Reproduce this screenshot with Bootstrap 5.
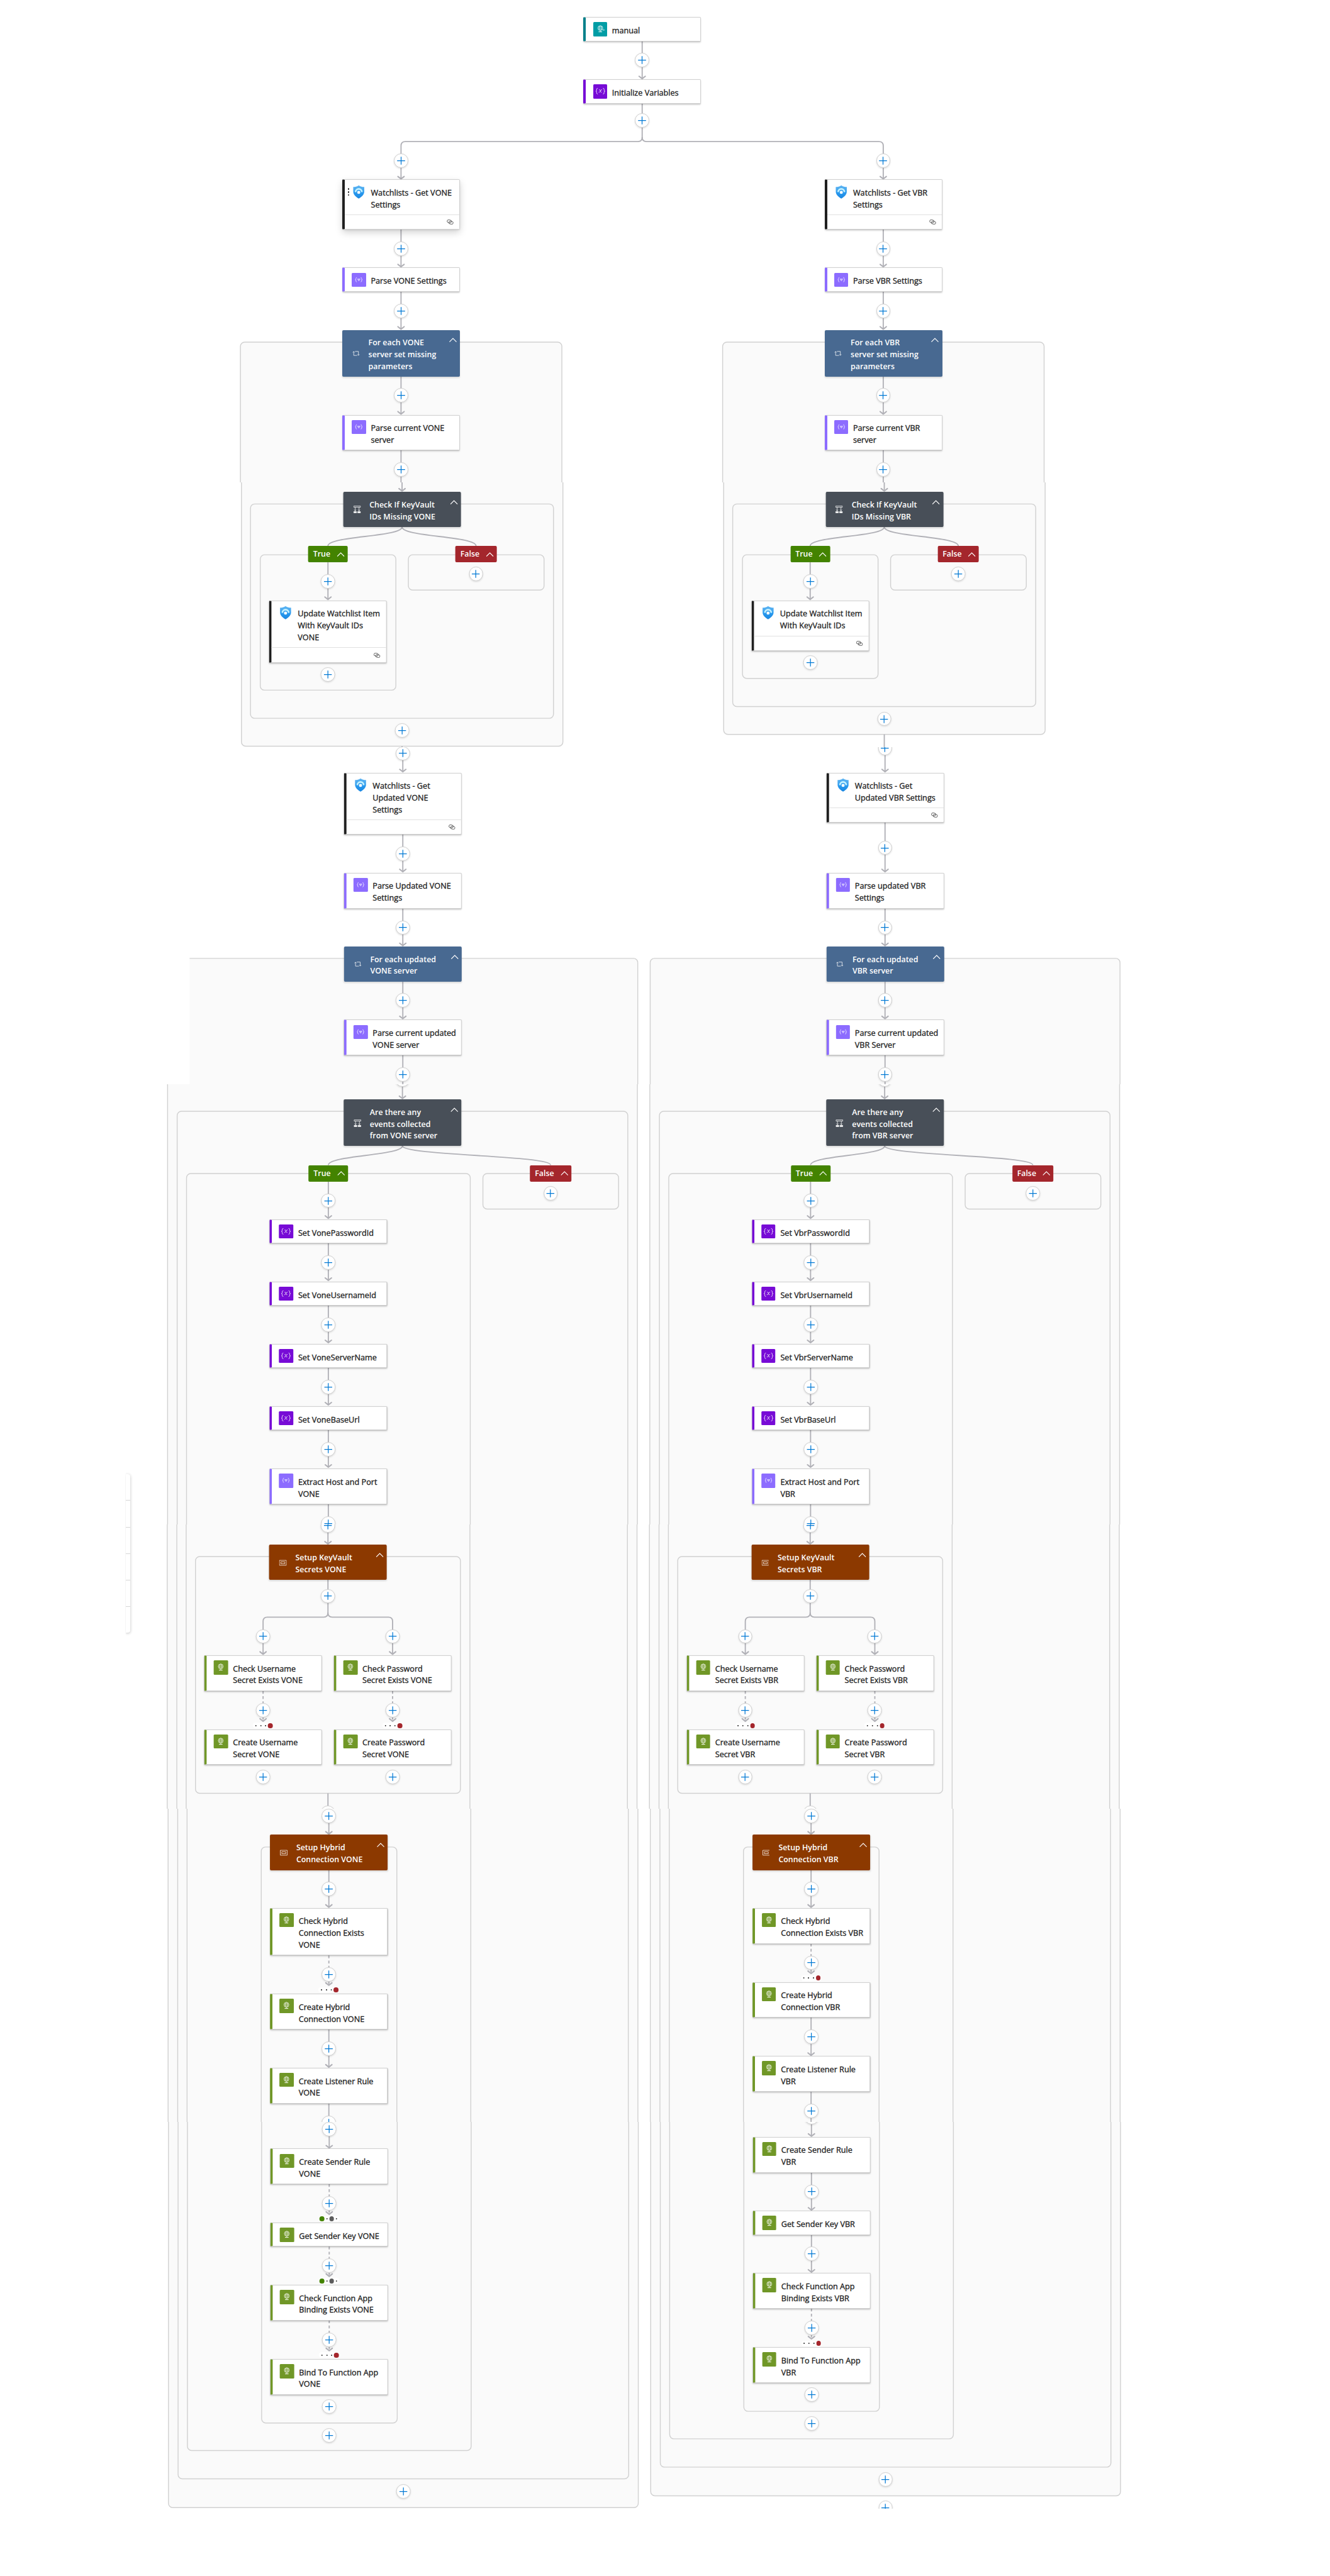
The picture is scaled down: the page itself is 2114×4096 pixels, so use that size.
<!DOCTYPE html>
<html lang="en">
<head>
<meta charset="utf-8">
<meta name="viewport" content="width=device-width, initial-scale=1">
<title>Logic app designer</title>
<link href="https://cdn.jsdelivr.net/npm/bootstrap@5.3.0/dist/css/bootstrap.min.css" rel="stylesheet">
<style>
  :root { --u: .74779px; }
  body { font-family: "Open Sans", "Noto Sans", sans-serif; background: #fff; color: #242424; overflow-x: hidden; }
  .flow { width: calc(2827 * var(--u)); height: 4096px; }
  .strip-layer { inset: 0; }
  .wires { left: 0; top: 0; }
  .frame-line { fill: #fafafa; stroke: #d1d1d1; stroke-width: 1.9; }
  .wire { fill: none; stroke: #b1b1b7; stroke-width: 2.5; }
  .wire-dash { stroke-dasharray: 6 5; }
  .tip { fill: none; stroke: #b1b1b7; stroke-width: 2.8; stroke-linecap: round; stroke-linejoin: round; }
  .node, .node-head, .branch-tag { font-size: 12.65px; font-weight: 500; line-height: calc(25 * var(--u)); white-space: nowrap; }
  .node-head, .branch-tag { font-size: 12.4px; font-weight: 600; }
  .node { width: calc(250 * var(--u)); background: #fff; border: 1px solid #d1d1d1; border-left: 4px solid var(--tone); border-radius: 2px; box-shadow: 0 1.2px 2.7px rgba(0,0,0,.13), 0 .3px .8px rgba(0,0,0,.11); }
  .node.is-hover { box-shadow: 0 5px 12px rgba(0,0,0,.17), 0 1px 3px rgba(0,0,0,.11); }
  .node-body { padding-left: calc(14.8 * var(--u)); padding-top: calc(9.5 * var(--u)); gap: calc(10.5 * var(--u)); }
  .node-icon { width: calc(30 * var(--u)); height: calc(30 * var(--u)); border-radius: 1.5px; flex: none; }
  .node-text { padding-top: calc(4.9 * var(--u)); color: #1c1c1c; -webkit-text-stroke: .32px #1c1c1c; }
  .node-foot { height: calc(31 * var(--u)); border-top: 1px solid #e1e1e1; padding-right: calc(12 * var(--u)); }
  .node-head { width: calc(250 * var(--u)); background: var(--tone); color: #fff; border-radius: 2px; box-shadow: 0 1.2px 2.7px rgba(0,0,0,.13); padding: calc(15.6 * var(--u)) calc(7 * var(--u)) 0 calc(21 * var(--u)); }
  .head-icon { width: calc(16 * var(--u)); height: calc(16 * var(--u)); flex: none; }
  .head-text { margin-left: calc(18.5 * var(--u)); }
  .chev { width: calc(16 * var(--u)); height: calc(10 * var(--u)); flex: none; }
  .node-head .chev { margin-top: calc(1.6 * var(--u)); }
  .branch-tag { height: calc(35 * var(--u)); background: var(--tone); color: #fff; border-radius: 2px; padding: 0 calc(7 * var(--u)) 0 calc(10.5 * var(--u)); }
  .branch-tag span { padding-top: 1px; }
  .plus-btn { width: calc(30.5 * var(--u)); height: calc(30.5 * var(--u)); background: #fff; border: 1px solid #d1d1d1; box-shadow: 0 1.2px 2.7px rgba(0,0,0,.13); padding: 0; }
  .plus-btn svg { width: calc(17.5 * var(--u)); height: calc(17.5 * var(--u)); }
  .run-after { width: calc(44 * var(--u)); height: calc(12 * var(--u)); background: #fff; }
  .run-after i { width: calc(10.3 * var(--u)); height: calc(10.3 * var(--u)); border-radius: 50%; }
  .run-after i.tiny { background: radial-gradient(circle, #444 0 .7px, transparent 1.3px); }
  .grip { left: calc(6 * var(--u)); top: calc(17 * var(--u)); width: 3px; gap: 2.6px; }
  .grip i { width: 2.4px; height: 2.4px; background: #555; }
  .side-panel { left: calc(267 * var(--u)); top: calc(3135 * var(--u)); width: calc(10 * var(--u)); height: calc(337 * var(--u)); background: #fff; border-radius: 0 4px 4px 0; box-shadow: 0 1px 4px rgba(0,0,0,.25); clip-path: inset(-8px -8px -8px 0); }
  .side-panel div + div { border-top: 1px solid #d6d6d6; }
</style>
</head>
<body>
<main class="flow position-relative overflow-hidden" id="flow"></main>

<script src="https://cdn.jsdelivr.net/npm/bootstrap@5.3.0/dist/js/bootstrap.bundle.min.js"></script>
<script>
  const K = 2114 / 2827;
  const px = v => (v * K).toFixed(2) + 'px';
  /* horizontal strips of the canvas: top, bottom, sideways shift */
  const strips = [[0,1026,0],[1026,1589,2.2],[1589,2306,3.8],[2306,3242,3],[3242,3846,2.2],[3846,4512,4.1],[4512,5334,4.9]]
    .map(([t, b, dx]) => ({ t, b, dx, html: '' }));
  const frames = [], wires = [];
  const stripAt = y => strips.find(s => y < s.b);

  const globe = extra => `<svg class="d-block w-100 h-100" viewBox="0 0 30 30" fill="none" stroke="#fff" stroke-width=".75"><circle cx="15" cy="13" r="5.3"/><ellipse cx="15" cy="13" rx="2.5" ry="5.3"/><path d="M9.7 13h10.6M10.5 10.2h9M10.5 15.8h9M15 18.3v2.600"/><path d="M11.2 20.9h7.6" stroke-width="1.3"/>${extra}</svg>`;
  const brace = (w, o) => `<path stroke-width="${w}" opacity="${o}" d="M9.6 8.6c-2 0-2.4.8-2.4 2.2v1.6c0 1.3-.5 2-1.9 2.2 1.4.2 1.9.9 1.9 2.2v1.6c0 1.4.4 2.2 2.4 2.2M20.6 8.6c2 0 2.4.8 2.4 2.2v1.6c0 1.3.5 2 1.9 2.2-1.4.2-1.9.9-1.9 2.2v1.6c0 1.4-.4 2.2-2.4 2.2"/>`;
  const icons = {
    manual: globe('<path d="M19.4 17h4M21.8 15.2l1.8 1.8-1.8 1.8"/>'),
    http: globe(''),
    vars: `<svg class="d-block w-100 h-100" viewBox="0 0 30 30" fill="none" stroke="#fff">${brace(1.2, .95)}<path stroke-width="1.1" d="M12.2 12c1.600-1 2.300-.2 2.700 1.700.5 2.200.9 4 2.900 3M18.600 11.700c-2-.6-2.900 1.400-3.700 2.900-.8 1.400-1.500 2.900-3.400 2.200"/></svg>`,
    parse: `<svg class="d-block w-100 h-100" viewBox="0 0 30 30" fill="none" stroke="#fff"><g transform="translate(3.6 3.3) scale(.76)">${brace(1.3, .95)}</g><path stroke-width=".9" opacity=".95" d="M12.5 12.9h5.4l-2.7 4.200zM13.700 14.500h3"/></svg>`,
    shield: `<svg class="d-block w-100 h-100" viewBox="0 0 30 30"><defs><linearGradient id="sg" x1="0" y1="0" x2="0" y2="1"><stop offset="0" stop-color="#5eb4f2"/><stop offset=".5" stop-color="#3aa2ee"/><stop offset=".51" stop-color="#2a9bf0"/><stop offset="1" stop-color="#1a86e0"/></linearGradient></defs><path fill="url(#sg)" d="M15 1c3.600 2.700 7.500 3.400 11.700 3.500v9.500c0 6.500-5.400 11.500-11.700 15C8.700 25.500 3.300 20.500 3.300 14V4.500C7.500 4.400 11.400 3.700 15 1z"/><path fill="none" stroke="#c3f1ff" stroke-width="3.4" d="M8.300 15.300c0-9 13.400-9 13.400 0"/><circle cx="15" cy="15.9" r="3.3" fill="#fff"/></svg>`
  };
  const tones = { manual: ['#00808a', '#009da5'], http: ['#709727', '#709727'], vars: ['#770bd6', '#770bd6'], parse: ['#8c6cff', '#8c6cff'], shield: ['#1f1f1f', 'transparent'] };
  const link = `<svg width="11" height="8" viewBox="0 0 15 11" fill="none" stroke="#444" stroke-width="1.1"><rect x=".9" y=".9" width="9.4" height="6" rx="3" transform="rotate(8 5 4)"/><rect x="4.7" y="4" width="9.4" height="6" rx="3" transform="rotate(8 9 7)"/></svg>`;
  const chev = `<svg class="chev" viewBox="0 0 16 10" fill="none" stroke="#fff" stroke-width="1.5"><path d="M.6 9L8 1.400 15.400 9"/></svg>`;
  const heads = {
    loop: ['#486991', `<path d="M3 4v8.300h7.200M.9 5.900L3 3.800l2.100 2.100M5.800 3.700H13V12M10.900 10.100L13 12.200l2.100-2.100"/>`],
    cond: ['#484f58', `<path d="M.8.9h14.400v2.600H.8zM3.900 3.500v8M12.100 3.500v8M1.800 8.800l2.100 2.300 2.100-2.300M10 8.800l2.100 2.300 2.100-2.300"/><path fill="#fff" d="M.8 12.800h6v2.400h-6zM9.200 12.800h6v2.400h-6z"/>`],
    scope: ['#8c3900', `<path d="M.6 2.800h14.800v10.400H.6zM3.800 6h8.400v4H3.800z"/>`]
  };

  function put(s, cx, y, w, cls, style, inner, tag = 'div') {
    s.html += `<${tag} class="position-absolute ${cls}" style="left:${px(cx - w / 2)};top:${px(y - s.t)};${style}">${inner}</${tag}>`;
  }
  function node(kind, cx, y, h, text, hover) {
    const foot = kind === 'shield' ? `<div class="node-foot mt-auto d-flex align-items-center justify-content-end">${link}</div>` : '';
    const grip = hover ? '<span class="grip position-absolute d-flex flex-column"><i></i><i></i><i></i></span>' : '';
    put(stripAt(y), cx, y, 249.5, 'node d-flex flex-column' + (hover ? ' is-hover' : ''), `height:${px(h)};--tone:${tones[kind][0]}`,
      `${grip}<div class="node-body d-flex"><span class="node-icon" style="background:${tones[kind][1]}">${icons[kind]}</span><div class="node-text">${text}</div></div>${foot}`);
  }
  function head(kind, cx, y, h, text) {
    put(stripAt(y), cx, y, 249.5, 'node-head d-flex align-items-start', `height:${px(h)};--tone:${heads[kind][0]}`,
      `<svg class="head-icon align-self-center" style="margin-top:${px(-15)}" viewBox="0 0 16 16" fill="none" stroke="#fff" stroke-width="1">${heads[kind][1]}</svg><div class="head-text">${text}</div><span class="ms-auto d-flex">${chev}</span>`);
  }
  function tag(yes, cx, y) {
    const w = yes ? 84 : 88;
    put(stripAt(y), cx, y, w, 'branch-tag d-flex align-items-center justify-content-between', `width:${px(w)};--tone:${yes ? '#438300' : '#a4262c'}`, `<span>${yes ? 'True' : 'False'}</span>${chev}`);
  }
  function plus(cx, cy, s = stripAt(cy)) {
    put(s, cx, cy - 15.25, 30.5, 'plus-btn rounded-circle d-flex align-items-center justify-content-center', '', '<svg viewBox="0 0 18 18" stroke="#0078d4" stroke-width="1.7"><path d="M9 .3v17.400M.3 9h17.400"/></svg>', 'button');
  }
  function after(cx, cy, marks) {
    put(stripAt(cy), cx, cy - 6, 44, 'run-after rounded-pill d-flex align-items-center justify-content-center', '',
      marks.map(c => c ? `<i style="background:${c}"></i>` : '<i class="tiny"></i>').join(''));
  }
  const fail = [0, 0, 0, '#a4262c'], okSkip = ['#438300', 0, '#5c5c5c', 0];
  const frame = (l, r, t, b) => frames.push(`<rect class="frame-line" x="${l}" y="${t}" width="${r - l}" height="${b - t}" rx="9"/>`);
  const path = (d, c = '') => wires.push(`<path class="wire ${c}" d="${d}"/>`);
  const tip = (x, y) => wires.push(`<path class="tip" d="M${x - 6.6} ${y - 6.8}L${x} ${y - 1.6}L${x + 6.6} ${y - 6.8}"/>`);
  const wire = (x, a, b, dash) => { path(`M${x} ${a}V${b - 2}`, dash ? 'wire-dash' : ''); tip(x, b); };
  /* one trunk, two rounded arms */
  const fork = (x, a, y, x1, x2, b) => {
    path(`M${x} ${a}V${y - 8}`);
    for (const e of [x1, x2]) { const s = Math.sign(e - x); path(`M${x} ${y - 9}Q${x} ${y} ${x + 9 * s} ${y}H${e - 9 * s}Q${e} ${y} ${e} ${y + 9}V${b - 2}`); tip(e, b); }
  };
  const curve = (x, a, e, b) => path(`M${x} ${a}C${x} ${a + 21} ${e} ${b - 21} ${e} ${b}`);

  /* trigger */
  node('manual', 1365, 36.5, 51.5, 'manual');
  wire(1365, 88, 169, 0); plus(1365, 128);
  node('vars', 1365, 169, 51.5, 'Initialize Variables');
  fork(1365, 220, 301, 852.4, 1877.4, 382); plus(1365, 256);

  function column(o, N, S) {
    /* o: sideways offset, N: product name, S: height lost to the shorter captions */
    const v = N === 'VONE', M = o + 852.4, T = o + 694.9;
    plus(M, 341.3);
    node('shield', M, 381.7, 107, `Watchlists - Get ${N}<br>Settings`, v);
    wire(M, 488, 569); plus(M, 529);
    node('parse', M, 569, 51.5, `Parse ${N} Settings`);
    wire(M, 620, 701.5); plus(M, 661.2);

    frame(o + 511, o + 1194.3, 727.4, 1587 - S);
    head('loop', M, 701.5, 99.5, `For each ${N}<br>server set missing<br>parameters`);
    wire(M, 801, 882); plus(M, 841);
    node('parse', M, 882, 76, `Parse current ${N}<br>server`);
    wire(M, 957, 1046); plus(M, 998.3);
    frame(o + 530.2, o + 1174.3, 1072, 1527.7 - S);
    head('cond', M, 1046, 75, `Check If KeyVault<br>IDs Missing ${N}`);
    curve(M, 1121, T, 1161); curve(M, 1121, o + 1009.6, 1161);
    frame(o + 551, o + 839.2, 1180, 1467.8 - S);
    frame(o + 865.8, o + 1154.3, 1180, 1255);
    tag(1, T, 1161); tag(0, o + 1009.8, 1161);
    plus(o + 1009.6, 1220.8);
    wire(T, 1196, 1276.5); plus(T, 1236.3);
    node('shield', T, 1276.5, 132.5 - S, 'Update Watchlist Item<br>With KeyVault IDs' + (v ? '<br>VONE' : ''));
    plus(T, 1433.8 - S); plus(M, 1553.6 - S);

    wire(M, 1587 - S, 1643);
    plus(M, v ? 1602 : 1591, strips[2]);
    node('shield', M, 1643.2, 131.6 - S, v ? 'Watchlists - Get<br>Updated VONE<br>Settings' : 'Watchlists - Get<br>Updated VBR Settings');
    wire(M, 1774 - S, 1855.5); plus(M, v ? 1815.6 : 1802.8);
    node('parse', M, 1855.8, 76, `Parse ${v ? 'Updated' : 'updated'} ${N}<br>Settings`);
    wire(M, 1931, 2012.7); plus(M, 1972.4);

    frame(o + 353.2, o + 1351.8, 2038.2, 5332 - S);
    head('loop', M, 2012.7, 75, `For each updated<br>${N} server`);
    wire(M, 2088, 2168); plus(M, 2127.5);
    node('parse', M, 2168.3, 76, `Parse current updated<br>${N} ${v ? 'server' : 'Server'}`);
    wire(M, 2244, 2338); plus(M, 2285, strips[2]); plus(M, 2296, strips[3]);
    frame(o + 373.6, o + 1331.4, 2363.4, 5271 - S);
    head('cond', M, 2338, 99, `Are there any<br>events collected<br>from ${N} server`);
    curve(M, 2437, T, 2478); curve(M, 2437, o + 1167.4, 2478);
    frame(o + 393.5, o + 996.6, 2496, 5210.8 - S);
    frame(o + 1023.5, o + 1311.9, 2496, 2571.4);
    tag(1, T, 2477.6); tag(0, o + 1167.4, 2477.6);
    plus(o + 1167.4, 2537.6);

    /* variables */
    wire(T, 2512, 2592.6); plus(T, 2553);
    const P = v ? 'Vone' : 'Vbr';
    ['PasswordId', 'UsernameId', 'ServerName', 'BaseUrl'].forEach((n, i) => {
      const y = 2592.7 + i * 132.4;
      node('vars', T, y, 51.5, 'Set ' + P + n);
      wire(T, y + 51, y + 132); plus(T, y + 92);
    });
    node('parse', T, 3123, 76, `Extract Host and Port<br>${N}`);
    wire(T, 3199, 3285); plus(T, 3240, strips[3]); plus(T, 3244.3, strips[4]);

    /* key vault scope */
    const A = o + 557, B = o + 832.3;
    frame(o + 413.3, o + 976.5, 3310.3, 3813.7);
    head('scope', T, 3284.8, 75, `Setup KeyVault<br>Secrets ${N}`);
    fork(T, 3359, 3439, A, B, 3519.5); plus(T, 3394);
    [[A, 'Username'], [B, 'Password']].forEach(([x, n]) => {
      plus(x, 3479.6);
      node('http', x, 3519.8, 76, `Check ${n}<br>Secret Exists ${N}`);
      wire(x, 3596, 3662, 1); plus(x, 3636.8); after(x, 3669.4, fail);
      node('http', x, 3677, 76, `Create ${n}<br>Secret ${N}`);
      plus(x, 3779);
    });
    wire(T, 3813.7, 3901.5); plus(T, 3855, strips[4]); plus(T, 3861, strips[5]);

    /* hybrid connection scope */
    frame(o + 551.2, o + 839.4, 3927.4, 5152.3 - S);
    head('scope', T, 3901.5, 75, `Setup Hybrid<br>Connection ${N}`);
    wire(T, 3976, 4057); plus(T, 4016.3);
    node('http', T, 4057, 101.2 - S, v ? 'Check Hybrid<br>Connection Exists<br>VONE' : 'Check Hybrid<br>Connection Exists VBR');
    wire(T, 4158 - S, 4223 - S, 1); plus(T, 4198.7 - S); after(T, 4231.2 - S, fail);
    node('http', T, 4239.6 - S, 76, `Create Hybrid<br>Connection ${N}`);
    wire(T, 4315 - S, 4397 - S); plus(T, 4356.3 - S);
    node('http', T, 4397 - S, 76, `Create Listener Rule<br>${N}`);
    /* the button sits across the strip edge, so each strip draws its own */
    wire(T, 4473 - S, 4569 - S);
    if (v) { plus(T, 4513.5, strips[5]); plus(T, 4527.6, strips[6]); }
    else { plus(T, 4488.5, strips[5]); plus(T, 4502, strips[6]); }
    node('http', T, 4568.8 - S, 76, `Create Sender Rule<br>${N}`);
    wire(T, 4644 - S, (v ? 4710 : 4726) - S, v); plus(T, 4685.5 - S); if (v) after(T, 4718 - S, okSkip);
    node('http', T, 4726 - S, 51.5, `Get Sender Key ${N}`);
    wire(T, 4777 - S, (v ? 4842 : 4858) - S, v); plus(T, 4817.7 - S); if (v) after(T, 4850 - S, okSkip);
    node('http', T, 4858.4 - S, 76, `Check Function App<br>Binding Exists ${N}`);
    wire(T, 4934 - S, 5000 - S, 1); plus(T, 4975.5 - S); after(T, 5008 - S, fail);
    node('http', T, 5016.2 - S, 76, `Bind To Function App<br>${N}`);
    plus(T, 5117 - S); plus(T, 5178.2 - S); plus(M, 5297.8 - S);
  }
  column(0, 'VONE', 0);
  column(1025, 'VBR', 25);
  /* only the top of this one is above the lower edge of the last strip */
  plus(1877.4, 5333);

  const margin = '<rect x="0" y="1589" width="399.2" height="717" fill="#fff"/>';
  document.getElementById('flow').innerHTML = strips.map((s, i) => `
    <section class="position-relative overflow-hidden" style="height:${px(s.b - s.t)}">
      <svg class="wires position-absolute w-100 h-100" preserveAspectRatio="none" viewBox="${-s.dx} ${s.t} 2827 ${s.b - s.t}">${frames.join('')}${i === 2 ? margin : ''}${wires.join('')}</svg>
      <div class="strip-layer position-absolute" style="transform:translateX(${px(s.dx)})">${s.html}</div>
    </section>`).join('') +
    '<aside class="side-panel position-absolute d-flex flex-column">' + '<div class="flex-fill"></div>'.repeat(6) + '</aside>';
</script>
</body>
</html>
